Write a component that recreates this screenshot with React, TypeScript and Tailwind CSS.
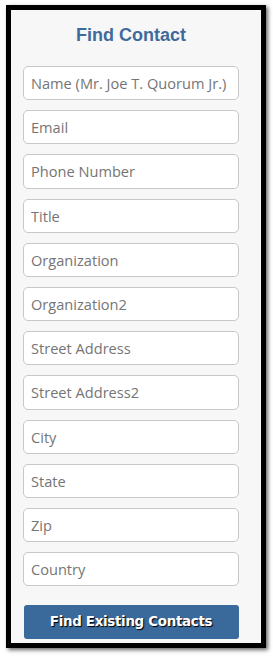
const fields = [
  'Name (Mr. Joe T. Quorum Jr.)',
  'Email',
  'Phone Number',
  'Title',
  'Organization',
  'Organization2',
  'Street Address',
  'Street Address2',
  'City',
  'State',
  'Zip',
  'Country',
];

const App = () => {
  return (
    <div className="w-[273px] h-[658px] bg-white pl-[6px] pt-[5px]">
      <div className="w-[260px] h-[643px] border-[5px] border-black bg-[#f7f7f7] shadow-[2px_2px_4px_rgba(0,0,0,0.6)] pl-[12px]">
        <div className="w-[216px] flex flex-col items-center">
          <h1 className="mt-[14px] text-[18px] leading-[22px] font-bold text-[#3f6b9b] font-['Liberation_Sans',Arial,sans-serif]">
            Find Contact
          </h1>
          <div className="mt-[20px] flex flex-col gap-[10px] w-full">
            {fields.map((f) => (
              <input
                key={f}
                placeholder={f}
                className="h-[34.2px] w-full rounded-[5px] border border-[#c8c8c8] bg-white px-[7px] text-[14.6px] text-[#555] placeholder:text-[#757575] font-['Open_Sans','Noto_Sans',sans-serif] outline-none"
              />
            ))}
          </div>
          <button className="mt-[19px] h-[34px] w-[215px] rounded-[3px] bg-[#3a699c] text-white text-[13.4px] font-bold font-['DejaVu_Sans',Verdana,sans-serif] tracking-[-0.3px] [text-shadow:1px_1px_1px_#000]">
            Find Existing Contacts
          </button>
        </div>
      </div>
    </div>
  );
};

export default App;
